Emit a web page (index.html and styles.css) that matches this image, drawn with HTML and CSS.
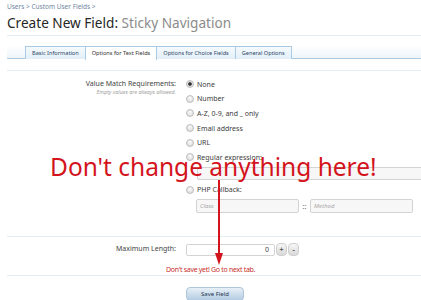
FILE: index.html
```html
<!DOCTYPE html>
<html>
<head>
    <meta charset="utf-8">
    <link rel="stylesheet" href="styles.css">
</head>
<body>
<div class="page">
    <nav class="crumbs"><a href="#">Users</a> &gt; <a href="#">Custom User Fields</a> &gt;</nav>
    <h1 class="title">Create New Field: <span>Sticky Navigation</span></h1>

    <ul class="tabs">
        <li>Basic Information</li>
        <li class="active">Options for Text Fields</li>
        <li>Options for Choice Fields</li>
        <li>General Options</li>
    </ul>

    <form class="form">
        <div class="row opts">
            <div class="label">Value Match Requirements:<small>Empty values are always allowed.</small></div>
            <ul class="choices">
                <li><label><input type="radio" name="match" checked> None</label></li>
                <li><label><input type="radio" name="match"> Number</label></li>
                <li><label><input type="radio" name="match"> A-Z, 0-9, and _ only</label></li>
                <li><label><input type="radio" name="match"> Email address</label></li>
                <li><label><input type="radio" name="match"> URL</label></li>
                <li>
                    <label><input type="radio" name="match"> Regular expression:</label>
                    <input type="text" class="text regex">
                </li>
                <li>
                    <label><input type="radio" name="match"> PHP Callback:</label>
                    <div class="callback">
                        <input type="text" class="text" placeholder="Class">
                        <span>::</span>
                        <input type="text" class="text" placeholder="Method">
                    </div>
                </li>
            </ul>
        </div>

        <div class="row length">
            <div class="label">Maximum Length:</div>
            <div class="spin">
                <input type="text" class="text" value="0">
                <button type="button">+</button>
                <button type="button">-</button>
            </div>
        </div>

        <p class="explain">Don't save yet! Go to next tab.</p>

        <div class="submit">
            <button type="button">Save Field</button>
        </div>
    </form>

    <!-- annotation drawn over the screenshot -->
    <div class="note">Don't change anything here!</div>
    <svg class="arrow" width="12" height="88" viewBox="0 0 12 88">
        <line x1="6" y1="0" x2="6" y2="76" stroke="#d4141c" stroke-width="2"/>
        <polygon points="2,73 10,73 6,85" fill="#d4141c"/>
    </svg>
</div>
</body>
</html>
```

FILE: styles.css
```css
body {
    margin: 0;
    background: #fff;
    color: #3c3c3c;
    font-family: "Noto Sans", "Open Sans", sans-serif;
    overflow: hidden;
}

.page {
    position: relative;
    height: 300px;
    padding-left: 7px;
}

.crumbs {
    padding-top: 3px;
    font-size: 6.5px;
    line-height: 8px;
    color: #7d8ea2;
}

.crumbs a {
    color: #6f86a3;
    text-decoration: none;
}

.title {
    margin: 3px 0 0;
    padding-bottom: 3px;
    border-bottom: 1px solid #e5edf2;
    font-size: 13.6px;
    font-weight: normal;
    line-height: 18px;
    color: #262626;
}

.title span {
    color: #8b8b8b;
}

.tabs {
    display: flex;
    margin: 9px 0 0;
    padding: 0 0 0 18px;
    list-style: none;
    height: 13px;
    border-bottom: 1px solid #aacbe3;
    background: linear-gradient(to bottom, #fff, #edf5fb);
}

.tabs li {
    height: 12px;
    margin-top: 1px;
    margin-right: -1px;
    padding: 0 6px;
    border: 1px solid #aacbe3;
    border-bottom: none;
    background: linear-gradient(to bottom, #f5fafd, #e2eff9);
    font-size: 5.6px;
    line-height: 12px;
    color: #2d4868;
}

.tabs li.active {
    height: 13px;
    margin-bottom: -1px;
    background: #fff;
    color: #333;
}

.form {
    margin-top: 11px;
    border-top: 1px solid #e3eef3;
}

.row {
    display: grid;
    grid-template-columns: 169px 1fr;
    column-gap: 10px;
}

.label {
    text-align: right;
    font-size: 7px;
    color: #444;
}

.label small {
    display: block;
    margin-top: -2.6px;
    font-size: 5.4px;
    font-style: italic;
    line-height: 6px;
    color: #a0a0a0;
}

.opts {
    padding: 6px 0 23px;
}

.opts .label {
    line-height: 14.6px;
}

.choices {
    margin: 0;
    padding: 0;
    list-style: none;
    font-size: 7px;
    color: #3c3c3c;
}

.choices label {
    display: flex;
    align-items: center;
    gap: 3px;
    height: 14.6px;
}

.choices input[type="radio"] {
    appearance: none;
    flex: none;
    width: 8px;
    height: 8px;
    margin: 0;
    border: 1px solid #bdbdbd;
    border-radius: 50%;
    background: radial-gradient(circle at 50% 35%, #fafafa, #d6d6d6);
}

.choices input[type="radio"]:checked {
    background: radial-gradient(circle, #333 0 1.4px, #e6e6e6 2.2px, #cfcfcf);
}

.text {
    box-sizing: border-box;
    margin: 0;
    border: 1px solid #d3d3d3;
    border-radius: 2px;
    background: #f7f7f7;
    font-family: inherit;
    font-size: 6px;
    color: #444;
}

.text::placeholder {
    font-style: italic;
    color: #a8a8a8;
}

.regex {
    display: block;
    width: 240px;
    height: 13px;
    margin: 2px 0 3px 11px;
}

.callback {
    display: flex;
    align-items: center;
    margin: 2px 0 0 10px;
}

.callback .text {
    width: 103px;
    height: 14px;
    padding: 0 3px;
}

.callback span {
    width: 11px;
    text-align: center;
    font-size: 7px;
    color: #666;
}

.length {
    border-top: 1px solid #e3eef3;
    padding-top: 6px;
}

.length .label {
    line-height: 12px;
}

.spin {
    display: flex;
    align-items: center;
    gap: 1px;
}

.spin .text {
    width: 89px;
    height: 12px;
    padding: 0 5px;
    background: #fff;
    text-align: right;
    font-size: 7px;
}

.spin button {
    width: 11px;
    height: 13px;
    padding: 0;
    border: 1px solid #cfcfcf;
    border-radius: 4px;
    background: linear-gradient(to bottom, #f6f6f6, #d9d9d9);
    font-family: inherit;
    font-size: 7px;
    font-weight: bold;
    line-height: 11px;
    color: #555;
}

.explain {
    margin: 9px 0 0 159px;
    font-size: 7px;
    letter-spacing: -0.3px;
    line-height: 10px;
    color: #c8312c;
}

.submit {
    border-top: 1px solid #e3eef3;
    padding: 3px 0 0 179px;
}

.submit button {
    width: 58px;
    height: 14px;
    padding: 0;
    border: 1px solid #aec5da;
    border-radius: 4px;
    background: linear-gradient(to bottom, #e8f0f7, #b3cce2);
    font-family: inherit;
    font-size: 6px;
    color: #1f3550;
}

.note {
    position: absolute;
    top: 152px;
    left: 50px;
    font-size: 24.5px;
    line-height: 30px;
    color: #d4141c;
    white-space: nowrap;
}

.arrow {
    position: absolute;
    top: 180px;
    left: 213px;
}
```
